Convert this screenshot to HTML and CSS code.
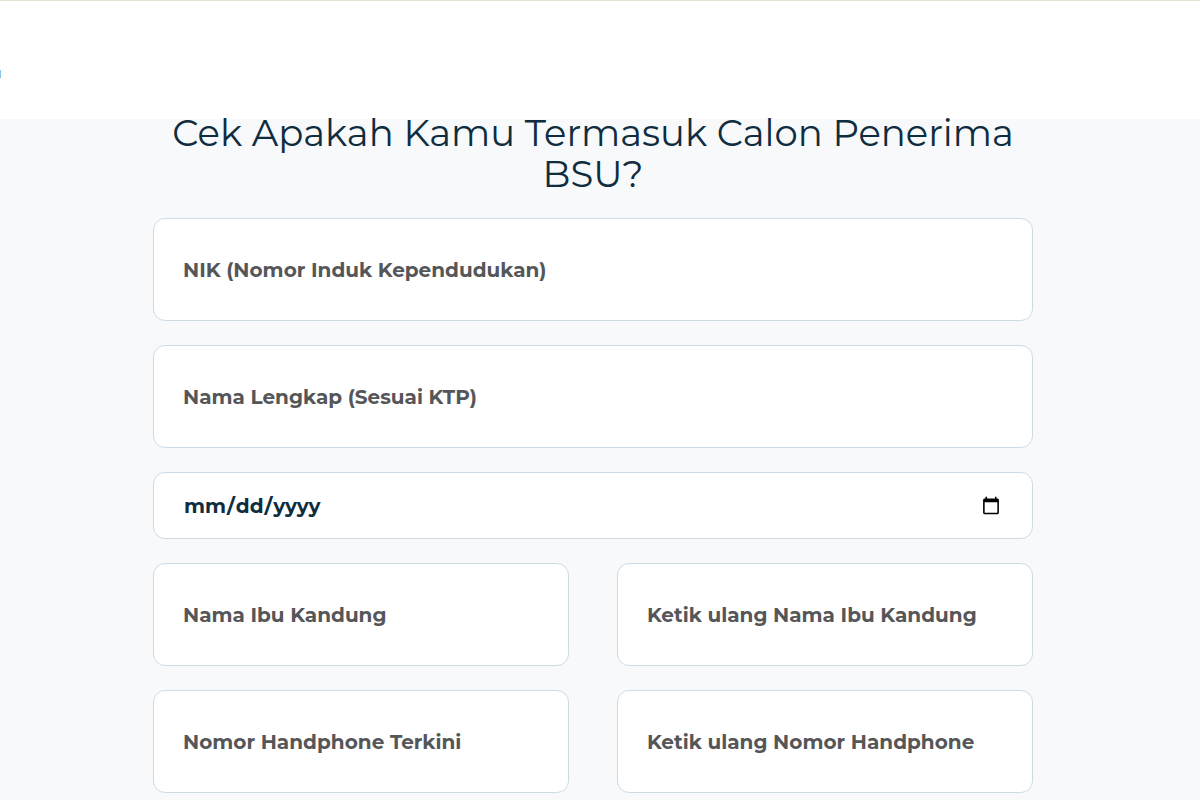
FILE: index.html
```html
<!DOCTYPE html>
<html lang="id">
<head>
    <meta charset="UTF-8">
    <meta name="viewport" content="width=device-width, initial-scale=1.0">
    <title>Cek Calon Penerima BSU</title>
    <link rel="stylesheet" href="styles.css">
</head>
<body>

<header class="topbar">
    <div class="topbar-mark"></div>
</header>

<main class="content">
    <form class="container">
        <h1>Cek Apakah Kamu Termasuk Calon Penerima BSU?</h1>

        <input type="text" class="field" name="nik" aria-label="NIK" placeholder="NIK (Nomor Induk Kependudukan)">
        <input type="text" class="field" name="nama" aria-label="Nama Lengkap" placeholder="Nama Lengkap (Sesuai KTP)">
        <input type="date" class="field field-date" name="tanggal_lahir" aria-label="Tanggal Lahir">

        <div class="row">
            <input type="text" class="field" name="ibu" aria-label="Nama Ibu Kandung" placeholder="Nama Ibu Kandung">
            <input type="text" class="field" name="ibu_ulang" aria-label="Ketik ulang Nama Ibu Kandung" placeholder="Ketik ulang Nama Ibu Kandung">
        </div>

        <div class="row">
            <input type="tel" class="field" name="hp" aria-label="Nomor Handphone" placeholder="Nomor Handphone Terkini">
            <input type="tel" class="field" name="hp_ulang" aria-label="Ketik ulang Nomor Handphone" placeholder="Ketik ulang Nomor Handphone">
        </div>
    </form>
</main>

</body>
</html>
```
FILE: styles.css
```css
* {
    box-sizing: border-box;
}
body {
    margin: 0;
    background-color: #f8f9fb;
    font-family: Montserrat, Inter, sans-serif;
    color: #0f2d3f;
}
.topbar {
    display: flex;
    align-items: center;
    height: 119px;
    padding-top: 28px;
    background-color: white;
    border-top: 1px solid #dfe4d3;
}
.topbar-mark {
    width: 1px;
    height: 8px;
    background-color: #8fc3e4;
}
.content {
    margin-top: -7px;
    padding: 0 30px 8px 16px;
}
.container {
    display: flex;
    flex-direction: column;
    gap: 24px;
    max-width: 880px;
    margin: 0 auto;
}
h1 {
    margin: 0;
    font-size: 37px;
    font-weight: 400;
    line-height: 41px;
    text-align: center;
}
.field {
    width: 100%;
    height: 103px;
    padding: 0 29px;
    background-color: white;
    border: 1px solid #cddbe5;
    border-radius: 12px;
    font-family: inherit;
    font-size: 20px;
    font-weight: 700;
    color: inherit;
}
.field::placeholder {
    color: #555659;
    opacity: 1;
}
.field-date {
    height: 67px;
}
.row {
    display: grid;
    grid-template-columns: 1fr 1fr;
    gap: 48px;
}
@media (max-width: 600px) {
    .row {
        grid-template-columns: 1fr;
        gap: 24px;
    }
}
```
